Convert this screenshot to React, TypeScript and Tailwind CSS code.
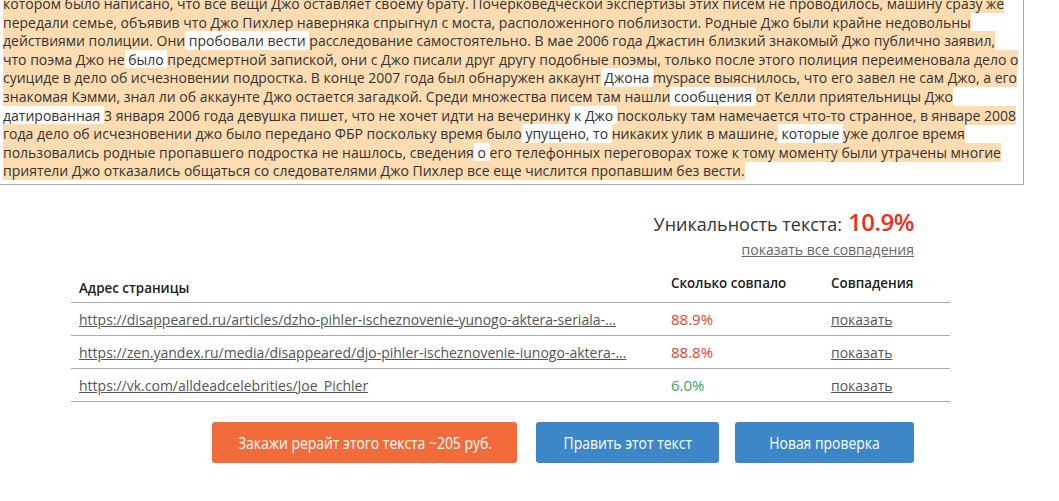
import React from 'react'

type Segment = { text: string; hit?: boolean }

// text rows as they wrap in the checked field; hit = matched fragment (orange)
const LINES: Segment[][] = [
  [{ text: 'котором было написано, что все вещи Джо оставляет своему брату. Почерковедческой экспертизы этих писем не проводилось, машину сразу же', hit: true }],
  [{ text: 'передали семье, объявив что Джо Пихлер наверняка спрыгнул с моста, расположенного поблизости. Родные Джо были крайне недовольны', hit: true }],
  [
    { text: 'действиями полиции. Они', hit: true },
    { text: ' пробовали вести ' },
    { text: 'расследование самостоятельно. В мае 2006 года Джастин близкий знакомый Джо публично заявил,', hit: true },
  ],
  [
    { text: 'что поэма Джо не', hit: true },
    { text: ' было ' },
    { text: 'предсмертной запиской, они с Джо писали друг другу подобные поэмы, только после этого полиция переименовала дело о', hit: true },
  ],
  [
    { text: 'суициде в дело об исчезновении подростка. В конце 2007 года был обнаружен аккаунт', hit: true },
    { text: ' Джона ' },
    { text: 'myspace выяснилось, что его завел не сам Джо, а его', hit: true },
  ],
  [
    { text: 'знакомая Кэмми, знал ли об аккаунте Джо остается загадкой. Среди множества писем там нашли', hit: true },
    { text: ' сообщения ' },
    { text: 'от Келли приятельницы Джо', hit: true },
  ],
  [
    { text: 'датированная ' },
    { text: '3 января 2006 года девушка пишет, что не хочет идти на вечеринку', hit: true },
    { text: ' к Джо ' },
    { text: 'поскольку там намечается что-то странное, в январе 2008', hit: true },
  ],
  [
    { text: 'года дело об исчезновении джо было передано ФБР поскольку время было', hit: true },
    { text: ' упущено, то ' },
    { text: 'никаких улик в машине,', hit: true },
    { text: ' которые ' },
    { text: 'уже долгое время', hit: true },
  ],
  [
    { text: 'пользовались родные пропавшего подростка не нашлось, сведения', hit: true },
    { text: ' о ' },
    { text: 'его телефонных переговорах тоже к тому моменту были утрачены многие', hit: true },
  ],
  [{ text: 'приятели Джо отказались общаться со следователями Джо Пихлер все еще числится пропавшим без вести.', hit: true }],
]

const MATCHES = [
  { url: 'https://disappeared.ru/articles/dzho-pihler-ischeznovenie-yunogo-aktera-seriala-...', percent: '88.9%', bad: true },
  { url: 'https://zen.yandex.ru/media/disappeared/djo-pihler-ischeznovenie-iunogo-aktera-...', percent: '88.8%', bad: true },
  { url: 'https://vk.com/alldeadcelebrities/Joe_Pichler', percent: '6.0%', bad: false },
]

function ActionButton({ label, className }: { label: string; className: string }) {
  return (
    <button className={`h-[41px] rounded-[3px] text-white flex items-center justify-center ${className}`}>
      <span className="inline-block text-[16px] scale-x-[0.87] whitespace-nowrap">{label}</span>
    </button>
  )
}

export default function App() {
  return (
    <div className="w-[1059px] h-[501px] overflow-hidden bg-white text-[#333] font-['Open_Sans',sans-serif]">
      {/* checked text, scrolled */}
      <div className="w-[1024px] h-[185px] overflow-hidden border-r border-b border-[#aaa] pl-[3px] pr-[4px]">
        <div className="-mt-[5px] text-[14px] leading-[18.6px] whitespace-nowrap">
          {LINES.map((line, i) => (
            <div key={i}>
              {line.map((seg, j) => (
                <span key={j} className={seg.hit ? 'bg-[#fddcb1]' : 'bg-white'}>
                  {seg.text}
                </span>
              ))}
            </div>
          ))}
        </div>
      </div>

      <div className="w-[879px] ml-[71px]">
        {/* result */}
        <div className="flex flex-col items-end pr-[36px] pt-[25px]">
          <div className="flex items-baseline text-[18px] leading-[24px] text-[#333]">
            Уникальность текста:
            <span className="ml-[6px] text-[24px] font-semibold tracking-[-0.5px] text-[#e5321f]">10.9%</span>
          </div>
          <a href="#" className="mt-[5px] text-[14px] leading-[18px] text-[#666] underline">
            показать все совпадения
          </a>
        </div>

        {/* matches table */}
        <div className="mt-[12px] text-[14px]">
          <div className="flex h-[32px] border-b border-[#aaa] font-semibold text-[13.4px] text-[#222]">
            <div className="w-[600px] pl-[8px] flex items-end pb-[4px]">Адрес страницы</div>
            <div className="w-[160px] pt-[2px]">Сколько совпало</div>
            <div className="flex-1 pt-[2px]">Совпадения</div>
          </div>
          {MATCHES.map((m) => (
            <div key={m.url} className="flex h-[33px] items-center border-b border-[#aaa]">
              <div className="w-[600px] pl-[8px]">
                <a href="#" className="text-[#555] underline">{m.url}</a>
              </div>
              <div className={`w-[160px] text-[15px] ${m.bad ? 'text-[#e5412d]' : 'text-[#3aa757]'}`}>{m.percent}</div>
              <div className="flex-1">
                <a href="#" className="text-[#555] underline">показать</a>
              </div>
            </div>
          ))}
        </div>

        {/* actions */}
        <div className="flex justify-end pr-[36px] mt-[20px]">
          <ActionButton label="Закажи рерайт этого текста ~205 руб." className="w-[305px] bg-[#f26b3a]" />
          <ActionButton label="Править этот текст" className="w-[183px] ml-[19px] bg-[#3d87c8]" />
          <ActionButton label="Новая проверка" className="w-[179px] ml-[16px] bg-[#3d87c8]" />
        </div>
      </div>
    </div>
  )
}
